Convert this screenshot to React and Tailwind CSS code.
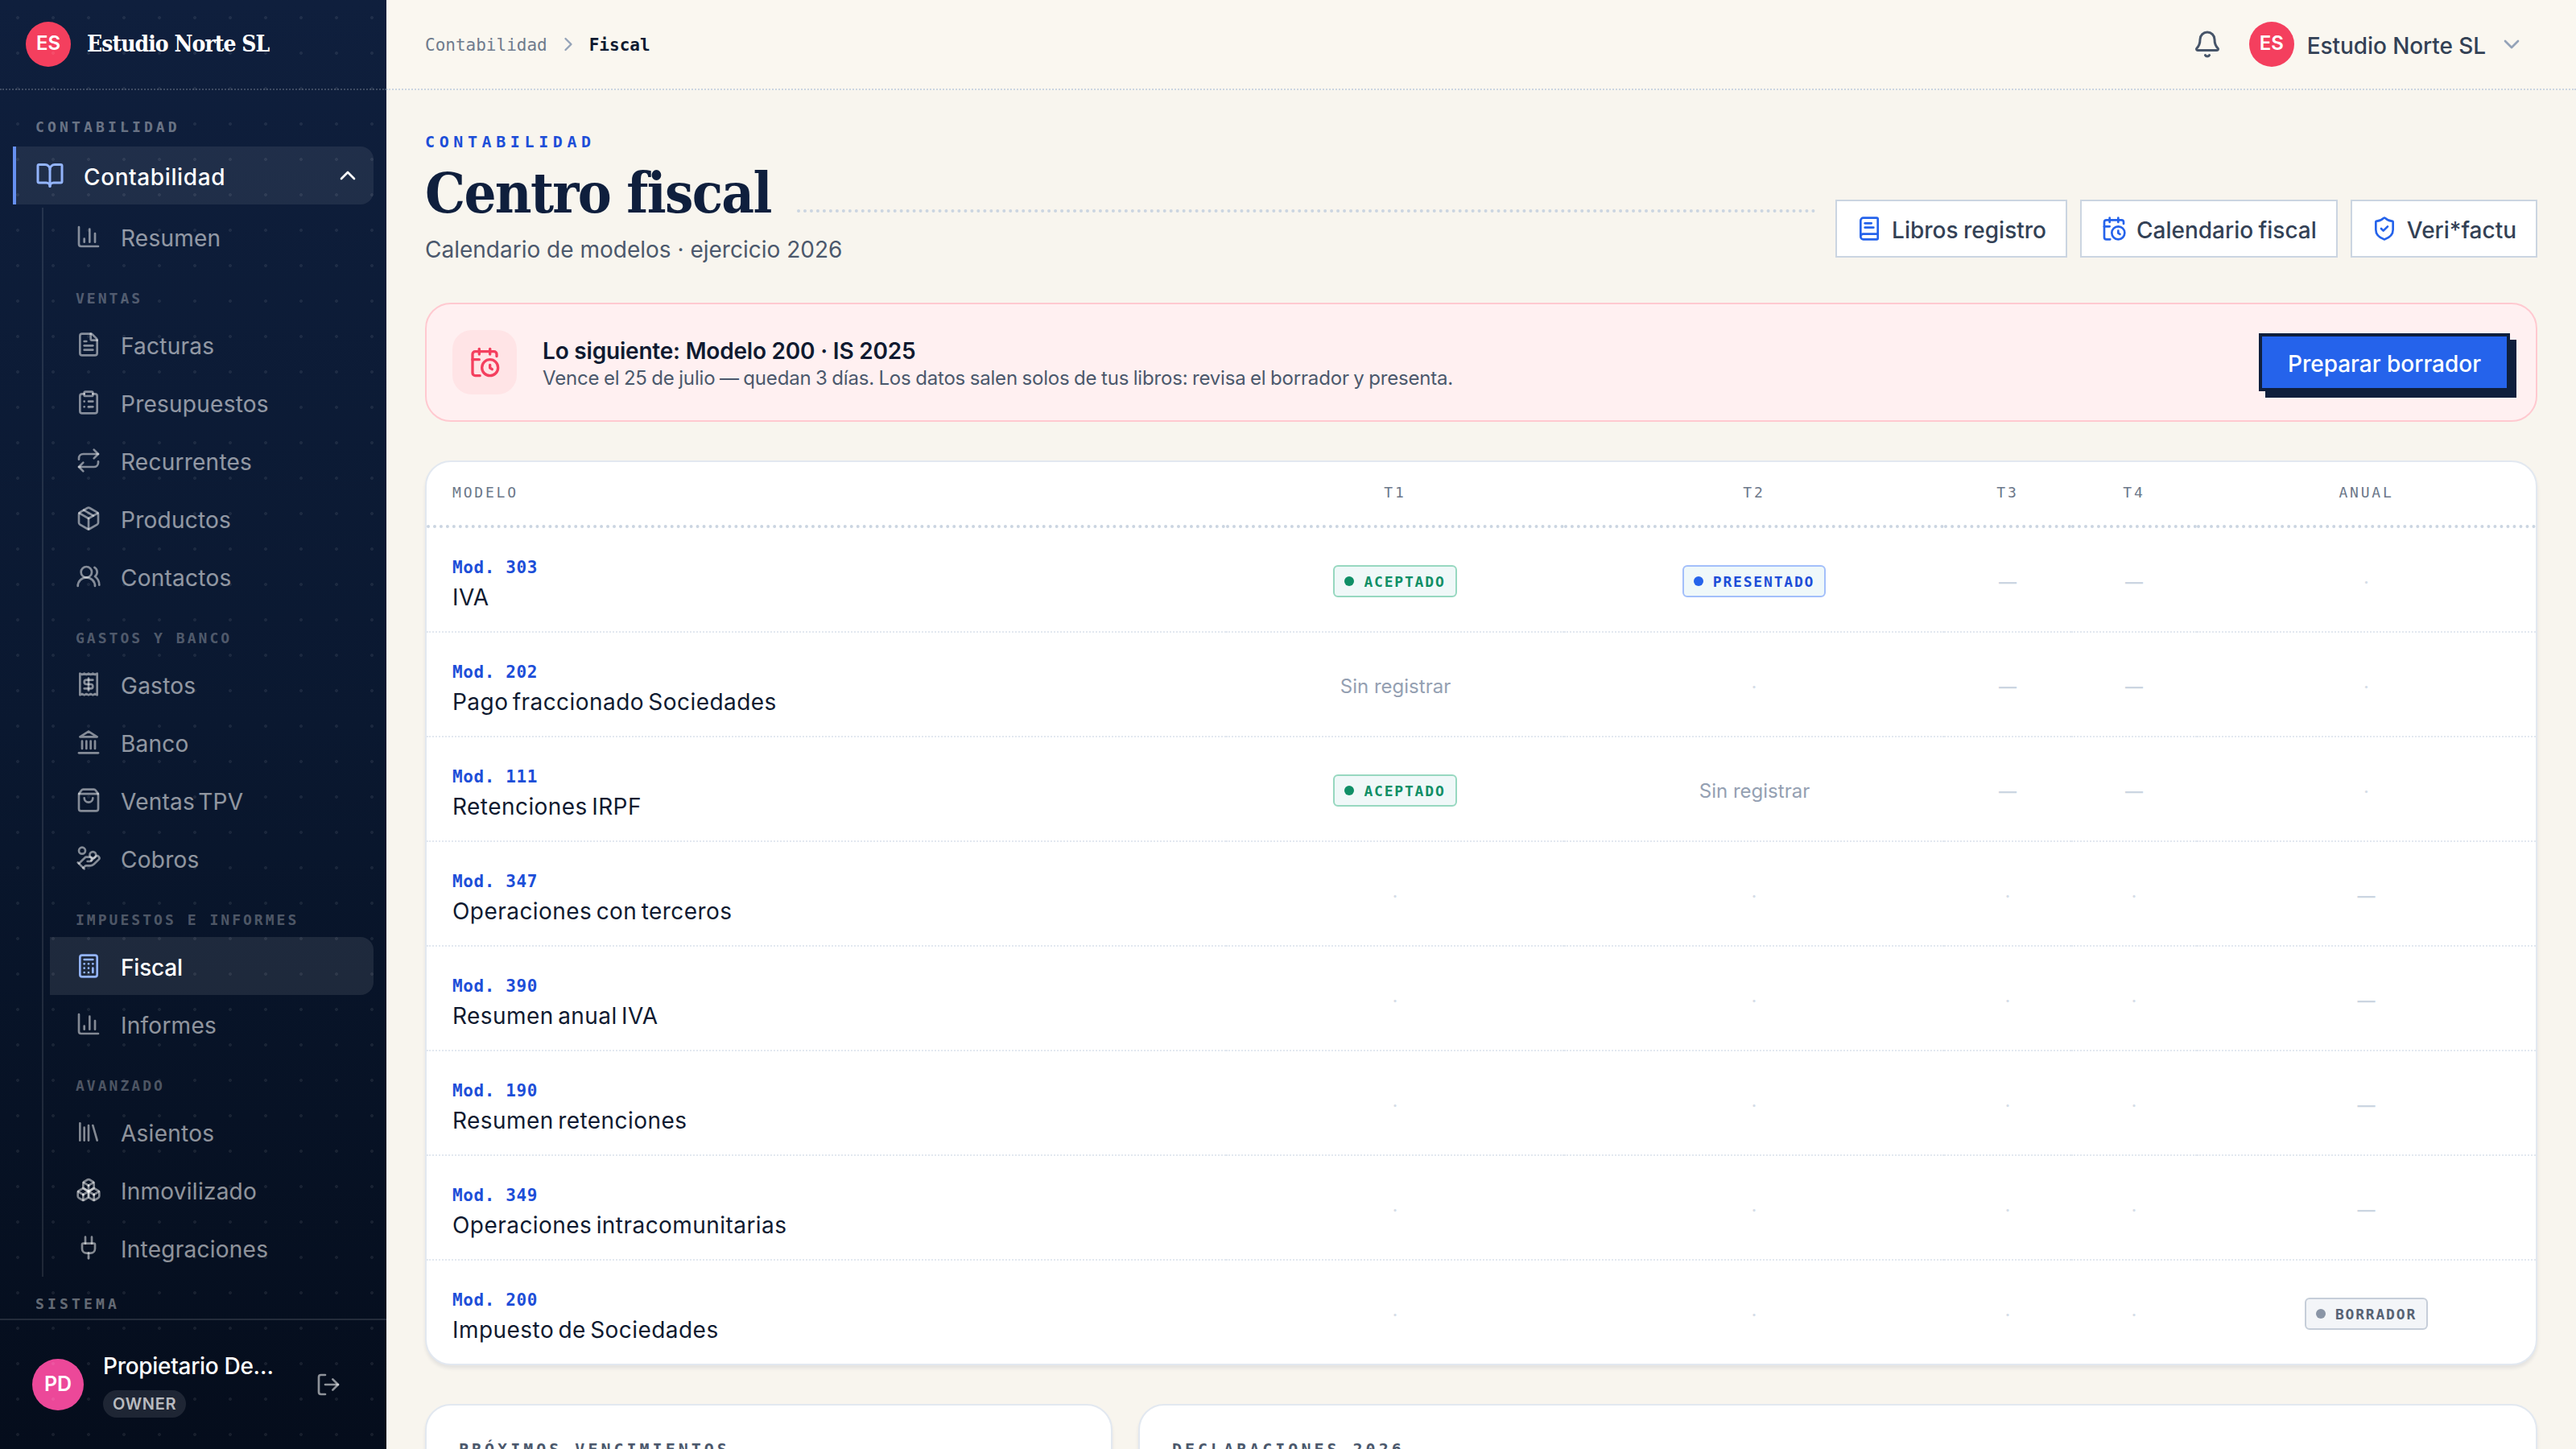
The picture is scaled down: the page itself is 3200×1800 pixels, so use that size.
import React from 'react'
import {
  Bell,
  BookOpen,
  BookText,
  Boxes,
  Calculator,
  CalendarClock,
  ChartColumn,
  ChevronDown,
  ChevronRight,
  ChevronUp,
  ClipboardList,
  FileText,
  HandCoins,
  Library,
  LogOut,
  Package,
  Plug,
  Repeat,
  ShieldCheck,
  ShoppingBag,
  UsersRound,
} from 'lucide-react'

const MONO = "font-['DejaVu_Sans_Mono','Liberation_Mono',monospace]"
const SERIF = "font-['DejaVu_Serif_Condensed','DejaVu_Serif','Liberation_Serif',serif]"

const svgProps = {
  viewBox: '0 0 24 24',
  fill: 'none',
  stroke: 'currentColor',
  strokeWidth: 2,
  strokeLinecap: 'round',
  strokeLinejoin: 'round',
}

const ReceiptIcon = ({ className }) => (
  <svg {...svgProps} className={className}>
    <path d="M4 2v20l2-1 2 1 2-1 2 1 2-1 2 1 2-1 2 1V2l-2 1-2-1-2 1-2-1-2 1-2-1-2 1Z" />
    <path d="M16 8h-6a2 2 0 1 0 0 4h4a2 2 0 1 1 0 4H8" />
    <path d="M12 17.5v-11" />
  </svg>
)

const BankIcon = ({ className }) => (
  <svg {...svgProps} className={className}>
    <path d="M3 22h18" />
    <path d="M6 18v-7" />
    <path d="M10 18v-7" />
    <path d="M14 18v-7" />
    <path d="M18 18v-7" />
    <path d="m12 2 8 5H4Z" />
  </svg>
)

const NAV = [
  { items: [{ label: 'Resumen', icon: ChartColumn }] },
  {
    title: 'VENTAS',
    items: [
      { label: 'Facturas', icon: FileText },
      { label: 'Presupuestos', icon: ClipboardList },
      { label: 'Recurrentes', icon: Repeat },
      { label: 'Productos', icon: Package },
      { label: 'Contactos', icon: UsersRound },
    ],
  },
  {
    title: 'GASTOS Y BANCO',
    items: [
      { label: 'Gastos', icon: ReceiptIcon },
      { label: 'Banco', icon: BankIcon },
      { label: 'Ventas TPV', icon: ShoppingBag },
      { label: 'Cobros', icon: HandCoins },
    ],
  },
  {
    title: 'IMPUESTOS E INFORMES',
    items: [
      { label: 'Fiscal', icon: Calculator, active: true },
      { label: 'Informes', icon: ChartColumn },
    ],
  },
  {
    title: 'AVANZADO',
    items: [
      { label: 'Asientos', icon: Library },
      { label: 'Inmovilizado', icon: Boxes },
      { label: 'Integraciones', icon: Plug },
    ],
  },
]

// Cell order: T1, T2, T3, T4, annual. '-' is pending, '.' does not apply.
const MODELS = [
  { code: '303', name: 'IVA', cells: ['ACEPTADO', 'PRESENTADO', '-', '-', '.'] },
  { code: '202', name: 'Pago fraccionado Sociedades', cells: ['none', '.', '-', '-', '.'] },
  { code: '111', name: 'Retenciones IRPF', cells: ['ACEPTADO', 'none', '-', '-', '.'] },
  { code: '347', name: 'Operaciones con terceros', cells: ['.', '.', '.', '.', '-'] },
  { code: '390', name: 'Resumen anual IVA', cells: ['.', '.', '.', '.', '-'] },
  { code: '190', name: 'Resumen retenciones', cells: ['.', '.', '.', '.', '-'] },
  { code: '349', name: 'Operaciones intracomunitarias', cells: ['.', '.', '.', '.', '-'] },
  { code: '200', name: 'Impuesto de Sociedades', cells: ['.', '.', '.', '.', 'BORRADOR'] },
]

const BADGES = {
  ACEPTADO: { box: 'border-[#97d8c0] bg-[#eff8f8] text-[#0f8f66]', dot: 'bg-[#0f8f66]' },
  PRESENTADO: { box: 'border-[#a3bffa] bg-[#eff8fa] text-[#1d4ed8]', dot: 'bg-[#2563eb]' },
  BORRADOR: { box: 'border-[#c6ced9] bg-[#f3f5f8] text-[#566274]', dot: 'bg-[#8a95a6]' },
}

const Avatar = ({ children, className }) => (
  <span
    className={`flex shrink-0 items-center justify-center rounded-full font-semibold text-white ${className}`}
  >
    {children}
  </span>
)

const Sidebar = () => (
  <aside className="relative flex h-full w-[480px] shrink-0 flex-col bg-linear-to-b from-[#0f1f3d] via-[#0a1830] to-[#050d1c]">
    <div className="pointer-events-none absolute inset-0 bg-[radial-gradient(circle,rgba(255,255,255,0.07)_1.8px,transparent_2.2px)] bg-size-[44px_44px]"></div>

    <div className="flex h-28 shrink-0 items-center gap-5 border-b-2 border-dotted border-white/20 px-8">
      <Avatar className="h-14 w-14 bg-[#f43f5e] pb-0.5 text-[24px]">ES</Avatar>
      <span className={`${SERIF} text-[28px] font-bold tracking-[-0.95px] text-white`}>
        Estudio Norte SL
      </span>
    </div>

    <nav className="flex min-h-0 grow flex-col overflow-hidden px-4">
      <div
        className={`${MONO} flex h-[70px] shrink-0 items-end pb-[11px] pl-7 text-[18px] font-bold tracking-[4.15px] text-white/40`}
      >
        CONTABILIDAD
      </div>
      <div className="flex h-[72px] shrink-0 items-center rounded-r-2xl border-l-4 border-[#6690f0] bg-white/8 pr-4 pl-6 text-white">
        <BookOpen className="size-9 text-[#93b4fb]" />
        <span className="ml-6 grow pt-[3px] text-[28px] font-medium tracking-[0.6px]">
          Contabilidad
        </span>
        <ChevronUp className="size-8" />
      </div>

      <div className="mt-1 ml-9 shrink-0 border-l-2 border-white/10 pl-2">
        {NAV.map((group, i) => (
          <div key={i}>
            {group.title && (
              <div
                className={`${MONO} flex h-[62px] items-end pb-2 pl-8 text-[18px] font-bold tracking-[3.03px] text-white/30`}
              >
                {group.title}
              </div>
            )}
            {group.items.map(({ label, icon: Icon, active }) => (
              <div
                key={label}
                className={`flex h-[72px] items-center gap-6 pl-8 text-[28px] ${
                  active ? 'rounded-r-2xl bg-white/9 font-medium text-white' : 'text-white/55'
                }`}
              >
                <Icon className={`size-8 ${active ? 'text-[#93b4fb]' : 'text-white/50'}`} />
                <span
                  className={`pt-[3px] [word-spacing:-4px] ${
                    active ? 'tracking-[-0.2px]' : 'tracking-[0.25px]'
                  }`}
                >
                  {label}
                </span>
              </div>
            ))}
          </div>
        ))}
      </div>

      <div
        className={`${MONO} mt-5 shrink-0 pl-7 text-[18px] font-bold tracking-[4.15px] text-white/40`}
      >
        SISTEMA
      </div>
    </nav>

    <div className="flex h-[162px] shrink-0 items-center border-t-2 border-white/12 px-10">
      <Avatar className="size-16 bg-[#ec4899] text-[25px]">PD</Avatar>
      <div className="ml-6 flex grow flex-col items-start gap-3">
        <span className="text-[28px] leading-[36px] font-medium tracking-[-0.3px] text-white">
          Propietario De…
        </span>
        <span className="flex h-[34px] items-center rounded-full bg-white/10 px-3 text-[20px] font-semibold tracking-[0.7px] text-white/70">
          OWNER
        </span>
      </div>
      <LogOut className="mr-4 size-8 text-white/55" />
    </div>
  </aside>
)

const TopBar = () => (
  <header className="flex h-28 shrink-0 items-center border-b-2 border-dotted border-[#cbd5e1] bg-[#faf7f0] px-12">
    <div className={`${MONO} flex items-center text-[21px]`}>
      <span className="pt-1 text-[#6f7b8d]">Contabilidad</span>
      <ChevronRight className="mx-3 size-7 text-[#94a3b8]" />
      <span className="pt-1 font-bold text-[#0f1a30]">Fiscal</span>
    </div>
    <div className="ml-auto flex items-center pr-4 text-[#334155]">
      <Bell className="size-9 text-[#475569]" />
      <Avatar className="ml-[34px] h-14 w-14 bg-[#f43f5e] pb-0.5 text-[24px]">ES</Avatar>
      <span className="ml-4 pt-1 text-[28px] font-[450] tracking-[-0.08px]">Estudio Norte SL</span>
      <ChevronDown className="ml-4 size-8 text-[#94a3b8]" />
    </div>
  </header>
)

const OutlineButton = ({ icon: Icon, children }) => (
  <button className="flex h-[72px] items-center gap-3 border-2 border-[#cbd5e1] bg-white px-6 text-[28px] font-[450] whitespace-nowrap text-[#334155]">
    <Icon className="size-8 text-[#2563eb]" />
    <span className="pt-[3px] [word-spacing:-1px]">{children}</span>
  </button>
)

const PageHeader = () => (
  <div className="flex h-[170px] items-end gap-6">
    <div className="grow">
      <div className={`${MONO} text-[20px] leading-[24px] font-bold tracking-[5.6px] text-[#1d4ed8]`}>
        CONTABILIDAD
      </div>
      <div className="mt-3 flex items-end gap-8">
        <h1
          className={`${SERIF} text-[70px] leading-[80px] font-bold tracking-[-1.7px] whitespace-nowrap text-[#0f1f3d]`}
        >
          Centro fiscal
        </h1>
        <div className="mb-4 grow border-t-4 border-dotted border-[#cbd5e1]"></div>
      </div>
      <p className="mt-2.5 text-[28px] leading-[40px] text-[#4b586c]">
        Calendario de modelos · ejercicio 2026
      </p>
    </div>
    <div className="mb-2.5 flex gap-4">
      <OutlineButton icon={BookText}>Libros registro</OutlineButton>
      <OutlineButton icon={CalendarClock}>Calendario fiscal</OutlineButton>
      <OutlineButton icon={ShieldCheck}>Veri*factu</OutlineButton>
    </div>
  </div>
)

const NextUpBanner = () => (
  <div className="mt-[46px] flex h-[148px] items-center rounded-[32px] border-2 border-[#ffc9d0] bg-[#fff0f1] px-8">
    <span className="flex size-20 items-center justify-center rounded-3xl bg-[#ffe4e6] text-[#f43f5e]">
      <CalendarClock className="size-10" />
    </span>
    <div className="ml-8 grow pt-[3px]">
      <div className="text-[28px] leading-[36px] font-semibold tracking-[-0.2px] text-[#0f1a30]">
        Lo siguiente: Modelo 200 · IS 2025
      </div>
      <div className="text-[24px] leading-[32px] tracking-[-0.18px] text-[#4b586c] [word-spacing:-1px]">
        Vence el 25 de julio — quedan 3 días. Los datos salen solos de tus libros: revisa el borrador
        y presenta.
      </div>
    </div>
    <button className="h-[72px] w-[312px] border-4 border-[#0f1f3d] bg-[#2563eb] pt-[3px] text-[28px] font-medium whitespace-nowrap text-white shadow-[8px_8px_0_#0f1f3d]">
      Preparar borrador
    </button>
  </div>
)

const Cell = ({ value }) => {
  const badge = BADGES[value]
  if (badge) {
    return (
      <span
        className={`${MONO} inline-flex h-10 items-center gap-3 rounded-md border-2 px-3 text-[18px] font-bold tracking-[1.8px] ${badge.box}`}
      >
        <span className={`size-3 rounded-full ${badge.dot}`}></span>
        {value}
      </span>
    )
  }
  if (value === 'none') {
    return <div className="pt-0.5 pl-px text-[24px] text-[#94a0b2]">Sin registrar</div>
  }
  if (value === '-') {
    return <div className="pt-[3px] text-[22px] font-semibold text-[#cbd5e1]">—</div>
  }
  return <div className="pt-[3px] text-[24px] text-[#d5dde7]">·</div>
}

const ModelsTable = () => (
  <div className="mt-12 overflow-hidden rounded-[32px] border-2 border-[#e2e8f0] bg-white shadow-[0_4px_4px_rgba(15,31,61,0.08)]">
    <table className="w-full table-fixed border-separate border-spacing-0">
      <colgroup>
        <col className="w-[993px]" />
        <col className="w-[420px]" />
        <col className="w-[472px]" />
        <col className="w-[158px]" />
        <col className="w-[156px]" />
        <col className="w-[421px]" />
      </colgroup>
      <thead>
        <tr className={`${MONO} h-[82px] text-[18px] tracking-[2.8px] text-[#6b7789]`}>
          {['MODELO', 'T1', 'T2', 'T3', 'T4', 'ANUAL'].map((h, i) => (
            <th
              key={h}
              className={`border-b-4 border-dotted border-[#cbd5e1] px-8 pb-1 font-normal ${
                i === 0 ? 'text-left' : 'text-center'
              }`}
            >
              {h}
            </th>
          ))}
        </tr>
      </thead>
      <tbody>
        {MODELS.map((m) => (
          <tr key={m.code} className="group h-[130px] last:h-[128px]">
            <td className="border-b-2 border-dotted border-[#e2e8f0] px-8 pt-[11px] group-last:border-b-0">
              <div
                className={`${MONO} text-[21px] leading-[32px] font-bold tracking-[0.6px] text-[#1d4ed8]`}
              >
                Mod. {m.code}
              </div>
              <div className="mt-px text-[28px] leading-[40px] tracking-[0.45px] text-[#0f1a30] [word-spacing:-3px]">
                {m.name}
              </div>
            </td>
            {m.cells.map((value, i) => (
              <td
                key={i}
                className="border-b-2 border-dotted border-[#e2e8f0] pt-1 text-center group-last:border-b-0"
              >
                <Cell value={value} />
              </td>
            ))}
          </tr>
        ))}
      </tbody>
    </table>
  </div>
)

const Panel = ({ title, className }) => (
  <section
    className={`h-[400px] rounded-[32px] border-2 border-[#e2e8f0] bg-white px-10 pt-[42px] shadow-[0_4px_4px_rgba(15,31,61,0.08)] ${className}`}
  >
    <h2 className={`${MONO} text-[20px] leading-[24px] font-bold tracking-[4px] text-[#4b586c]`}>
      {title}
    </h2>
  </section>
)

export default function App() {
  return (
    <div className="flex h-[1800px] w-[3200px] overflow-hidden bg-[#f8f5ee] font-['Inter','Liberation_Sans',sans-serif]">
      <Sidebar />
      <div className="flex min-w-0 grow flex-col">
        <TopBar />
        <main className="min-h-0 grow overflow-hidden px-12 pt-12">
          <PageHeader />
          <NextUpBanner />
          <ModelsTable />
          <div className="mt-12 flex gap-8">
            <Panel title="PRÓXIMOS VENCIMIENTOS" className="w-[854px]" />
            <Panel title="DECLARACIONES 2026" className="grow" />
          </div>
        </main>
      </div>
    </div>
  )
}
